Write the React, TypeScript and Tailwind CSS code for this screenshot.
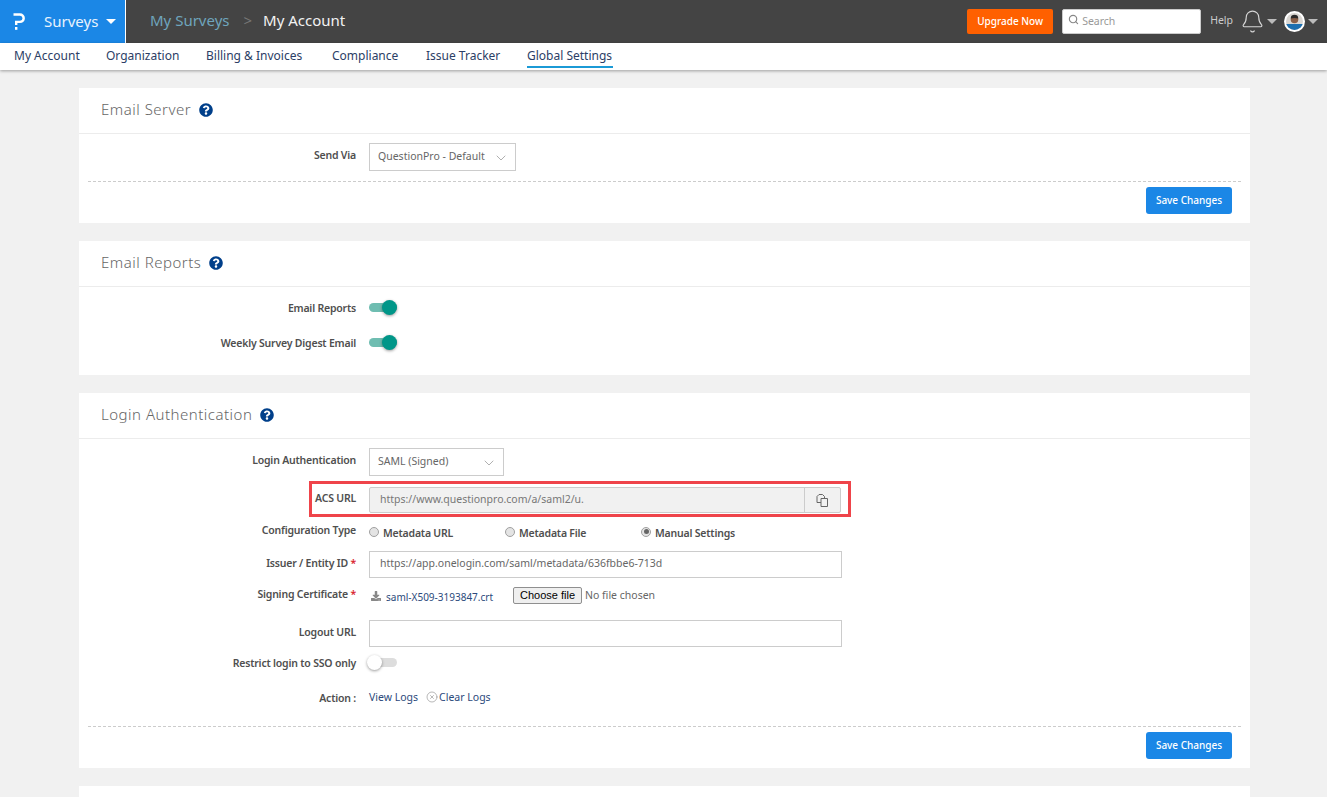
import React from "react";
import { Bell, ChevronDown, CircleX, Search } from "lucide-react";
import { FaDownload, FaQuestionCircle } from "react-icons/fa";

const tabs = [
  { label: "My Account", width: "w-[65px]" },
  { label: "Organization", width: "w-[73px]" },
  { label: "Billing & Invoices", width: "w-[99px]" },
  { label: "Compliance", width: "w-[67px]" },
  { label: "Issue Tracker", width: "w-[74px]" },
  { label: "Global Settings", width: "w-[86px]" },
];

function Caret({ className }: { className: string }) {
  return <span className={`w-0 h-0 border-x-[5px] border-x-transparent border-t-[5px] ${className}`} />;
}

function Logo() {
  return (
    <svg width="12" height="17" viewBox="0 0 12 17" fill="none">
      <path d="M0.500 1.500h6.500a3.600 3.600 0 0 1 0 7.400H3.200v3" stroke="#fff" strokeWidth="2.400" />
      <rect x="2" y="14" width="2.400" height="2.800" fill="#fff" />
    </svg>
  );
}

function Avatar() {
  return (
    <svg width="21" height="21" viewBox="0 0 21 21">
      <circle cx="10.500" cy="10.500" r="10.500" fill="#fff" />
      <clipPath id="face">
        <circle cx="10.500" cy="10.500" r="8.500" />
      </clipPath>
      <g clipPath="url(#face)">
        <rect width="21" height="21" fill="#d9d6d2" />
        <rect y="13" width="21" height="8" fill="#1c6fb0" />
        <circle cx="10.500" cy="8.500" r="3.800" fill="#8a5f48" />
        <path d="M6.700 7.500c0-2.800 1.600-3.800 3.800-3.800s3.800 1 3.800 3.800c-2.400-.8-5.200-.8-7.600 0z" fill="#2a2a2a" />
      </g>
    </svg>
  );
}

function CopyIcon() {
  return (
    <svg width="13" height="13" viewBox="0 0 13 13" fill="#f1f1f1" stroke="#666666" strokeWidth="1">
      <path d="M3 .500h3.500l2 2v6H1V2.500z" />
      <path d="M5 4.500h4l2.500 0v8H5z" />
    </svg>
  );
}

function TopBar() {
  return (
    <div className="h-[43px] bg-[#444444] flex items-center text-white">
      <div className="w-[126px] h-full bg-[#1b87e6] border-r border-white flex items-center pl-[13px]">
        <Logo />
        <span className="ml-[19px] -mt-[1px] text-[15px] text-[#e8f3fd]">Surveys</span>
        <Caret className="ml-[8px] border-t-white" />
      </div>
      <span className="ml-[24px] -mt-[3px] text-[15px] text-[#6fa5bd]">My Surveys</span>
      <span className="ml-[14px] -mt-[3px] text-[15px] text-[#777777]">&gt;</span>
      <span className="ml-[11px] -mt-[3px] text-[15px] text-[#f2f2f2]">My Account</span>
      <div className="ml-auto flex items-center">
        <button className="w-[86px] h-[25px] bg-[#ff6000] rounded-[2px] text-[10px] font-medium text-white">Upgrade Now</button>
        <div className="ml-[9px] w-[139px] h-[25px] bg-white rounded-[2px] border border-[#cccccc] flex items-center pl-[5px] text-[10.500px] text-[#999999]">
          <Search size={11} strokeWidth={2.500} className="text-[#888888] -mt-[4px]" />
          <span className="ml-[3px]">Search</span>
        </div>
        <span className="ml-[9px] -mt-[2px] text-[10.500px] text-[#cccccc]">Help</span>
        <Bell size={25} strokeWidth={1.100} className="ml-[7px] text-[#d5d5d5]" />
        <Caret className="ml-[2px] border-t-[#bbbbbb]" />
        <span className="ml-[7px] flex"><Avatar /></span>
        <Caret className="ml-[3px] mr-[9px] border-t-[#bbbbbb]" />
      </div>
    </div>
  );
}

function SubNav() {
  return (
    <div className="relative h-[27px] bg-white flex items-start pl-[14px] gap-[27px] shadow-[0_1px_3px_rgba(0,0,0,0.35)] text-[12px] text-[#2c3e66]">
      {tabs.map((tab) => (
        <span
          key={tab.label}
          className={`h-[21px] mt-[4px] leading-[17px] whitespace-nowrap ${tab.width} ${tab.label === "Global Settings" ? "border-b-2 border-[#1b9ad6]" : ""}`}
        >
          {tab.label}
        </span>
      ))}
    </div>
  );
}

function Card({ title, className, children }: { title: string; className: string; children: React.ReactNode }) {
  return (
    <section className={`w-[1171px] ml-[79px] bg-white ${className}`}>
      <div className="h-[46px] border-b border-[#ececec] pl-[22px] pb-[2px] flex items-center text-[15px] text-[#666666] font-light tracking-[0.5px]">
        {title}
        <FaQuestionCircle className="ml-[8px] text-[14px] text-[#003f8a]" />
      </div>
      {children}
    </section>
  );
}

function Row({ label, required, labelTop, className, children }: { label: string; required?: boolean; labelTop?: string; className: string; children: React.ReactNode }) {
  return (
    <div className={`flex items-start ${className}`}>
      <div className={`w-[277px] text-right text-[10.500px] font-semibold tracking-[-0.2px] leading-[16px] text-[#4f4f4f] ${labelTop ?? ""}`}>
        {label}
        {required && <span className="text-[#d9232e]"> *</span>}
      </div>
      <div className="ml-[13px] flex items-center">{children}</div>
    </div>
  );
}

function Select({ value, width }: { value: string; width: string }) {
  return (
    <div className={`h-[28px] border border-[#cccccc] bg-white flex items-center pl-[8px] pr-[6px] justify-between text-[10.500px] text-[#666666] ${width}`}>
      {value}
      <ChevronDown size={16} strokeWidth={1} className="text-[#888888] mt-[2px]" />
    </div>
  );
}

function Toggle({ on }: { on: boolean }) {
  return (
    <div className={`relative w-[28px] h-[9px] rounded-full ${on ? "bg-[#6fbdb1]" : "bg-[#dddddd]"}`}>
      <span
        className={`absolute -top-[3px] w-[15px] h-[15px] rounded-full shadow-[0_1px_3px_rgba(0,0,0,0.4)] ${on ? "right-0 bg-[#009688]" : "-left-[2px] bg-white"}`}
      />
    </div>
  );
}

function Radio({ label, checked, width }: { label: string; checked?: boolean; width: string }) {
  return (
    <label className={`flex items-center text-[10.500px] font-semibold tracking-[-0.2px] text-[#4f4f4f] ${width}`}>
      <span className="w-[10px] h-[10px] rounded-full border border-[#a0a0a0] bg-[#e4e4e4] flex items-center justify-center -mt-[3px]">
        {checked && <span className="w-[5px] h-[5px] rounded-full bg-[#666666]" />}
      </span>
      <span className="ml-[4px] mt-[1px]">{label}</span>
    </label>
  );
}

function TextBox({ value }: { value: string }) {
  return (
    <div className="w-[473px] h-[27px] border border-[#cccccc] bg-white pl-[10px] flex items-center text-[10.500px] text-[#666666]">
      {value}
    </div>
  );
}

function SaveBar({ className }: { className: string }) {
  return (
    <div className={className}>
      <div className="mx-[9px] border-t border-dashed border-[#cccccc]" />
      <div className="flex justify-end pr-[18px] pt-[5px]">
        <button className="w-[86px] h-[27px] bg-[#1b87e6] rounded-[3px] text-[10px] font-medium text-white">Save Changes</button>
      </div>
    </div>
  );
}

export default function App() {
  return (
    <div className="h-[797px] overflow-hidden bg-[#f1f1f1] font-['Noto_Sans',sans-serif]">
      <TopBar />
      <SubNav />

      <Card title="Email Server" className="mt-[18px] h-[135px]">
        <Row label="Send Via" labelTop="mt-[4px]" className="mt-[9px]">
          <Select value="QuestionPro - Default" width="w-[147px]" />
        </Row>
        <SaveBar className="mt-[10px]" />
      </Card>

      <Card title="Email Reports" className="mt-[18px] h-[134px]">
        <Row label="Email Reports" className="mt-[13px]">
          <div className="mt-[3px]"><Toggle on /></div>
        </Row>
        <Row label="Weekly Survey Digest Email" className="mt-[19px]">
          <div className="mt-[3px]"><Toggle on /></div>
        </Row>
      </Card>

      <Card title="Login Authentication" className="mt-[18px] h-[375px]">
        <Row label="Login Authentication" labelTop="mt-[4px]" className="mt-[9px]">
          <Select value="SAML (Signed)" width="w-[135px]" />
        </Row>
        <div className="relative mt-[11px]">
          <div className="absolute left-[230px] -top-[6px] w-[542px] h-[36px] border-[3px] border-[#ef444a]" />
          <Row label="ACS URL" labelTop="mt-[3px]" className="">
            <div className="w-[472px] h-[26px] border border-[#cccccc] bg-[#f1f1f1] rounded-[2px] flex items-center text-[10.500px] text-[#777777]">
              <span className="w-[216px] ml-[10px] overflow-hidden whitespace-nowrap">https://www.questionpro.com/a/saml2/u.</span>
              <span className="ml-auto w-[36px] h-full border-l border-[#cccccc] flex items-center justify-center">
                <CopyIcon />
              </span>
            </div>
          </Row>
        </div>
        <Row label="Configuration Type" className="mt-[9px]">
          <div className="mt-[3px] flex items-center">
            <Radio label="Metadata URL" width="w-[136px]" />
            <Radio label="Metadata File" width="w-[136px]" />
            <Radio label="Manual Settings" checked width="w-[110px]" />
          </div>
        </Row>
        <Row label="Issuer / Entity ID" required labelTop="mt-[4px]" className="mt-[9px]">
          <TextBox value="https://app.onelogin.com/saml/metadata/636fbbe6-713d" />
        </Row>
        <Row label="Signing Certificate" required labelTop="-mt-[1px]" className="mt-[9px]">
          <FaDownload className="ml-[2px] text-[10px] text-[#888888] mt-[2px]" />
          <a className="ml-[5px] w-[127px] text-[10px] leading-[14px] text-[#2c4a7c] mt-[3px]">saml-X509-3193847.crt</a>
          <button className="w-[69px] h-[17px] border border-[#8f8f8f] rounded-[2px] bg-[#efefef] text-[11px] leading-[14px] text-black font-['Liberation_Sans',sans-serif]">Choose file</button>
          <span className="ml-[3px] leading-[16px] text-[10.500px] text-[#666666]">No file chosen</span>
        </Row>
        <Row label="Logout URL" labelTop="mt-[4px]" className="mt-[16px]">
          <TextBox value="" />
        </Row>
        <Row label="Restrict login to SSO only" className="mt-[8px]">
          <div className="mt-[3px]"><Toggle on={false} /></div>
        </Row>
        <Row label="Action :" className="mt-[19px]">
          <a className="text-[10.500px] text-[#2c4a7c]">View Logs</a>
          <CircleX size={12} strokeWidth={1.200} className="ml-[8px] text-[#888888] -mt-[2px]" />
          <a className="ml-[1px] text-[10.500px] text-[#2c4a7c]">Clear Logs</a>
        </Row>
        <SaveBar className="mt-[20px]" />
      </Card>

      <section className="w-[1171px] ml-[79px] mt-[18px] h-[40px] bg-white" />
    </div>
  );
}
